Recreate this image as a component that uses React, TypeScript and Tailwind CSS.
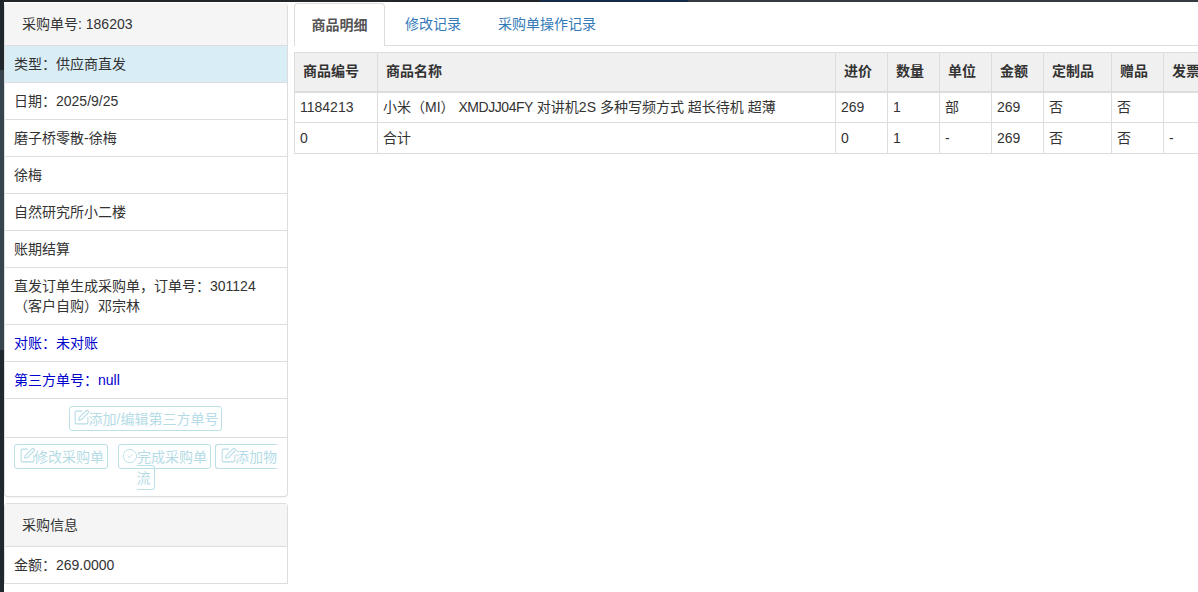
import React from 'react';
import { SquarePen, CircleCheck } from 'lucide-react';

const font = "font-['Liberation_Sans','Noto_Sans_CJK_SC',sans-serif]";

const infoRows = ['日期：2025/9/25', '磨子桥零散-徐梅', '徐梅', '自然研究所小二楼', '账期结算'];

const headers = [
  { label: '商品编号', width: 'w-[83px]' },
  { label: '商品名称', width: 'w-[458px]' },
  { label: '进价', width: 'w-[52px]' },
  { label: '数量', width: 'w-[52px]' },
  { label: '单位', width: 'w-[52px]' },
  { label: '金额', width: 'w-[52px]' },
  { label: '定制品', width: 'w-[68px]' },
  { label: '赠品', width: 'w-[52px]' },
  { label: '发票', width: 'w-[52px]' },
];

const productName = (
  <>
    小米（MI） <span className="tracking-[-0.45px]">XMDJJ04FY</span> 对讲机2S 多种写频方式 超长待机 超薄
  </>
);

const rows: { id: string; cells: React.ReactNode[] }[] = [
  { id: '1184213', cells: ['1184213', productName, '269', '1', '部', '269', '否', '否', ''] },
  { id: '0', cells: ['0', '合计', '0', '1', '-', '269', '否', '否', '-'] },
];

const Row: React.FC<{ children: React.ReactNode; className?: string }> = ({ children, className = '' }) => (
  <div className={`border-b border-[#ddd] px-[9px] py-[8px] leading-[20px] ${className}`}>{children}</div>
);

// inline on purpose: the last button breaks over two lines like the original link does
const GhostButton: React.FC<{ label: string; icon?: 'edit' | 'check'; className?: string }> = ({ label, icon = 'edit', className = 'pl-[5px]' }) => (
  <a className={`rounded-[3px] border border-[#bce0e8] py-[3.5px] pr-[3px] text-[#b5dce6] ${className}`}>
    {icon === 'edit' ? (
      <SquarePen className="mx-[-1.5px] inline h-[17px] w-[17px] align-[-3px]" strokeWidth={1.5} />
    ) : (
      <CircleCheck className="mx-[-1px] inline h-[16px] w-[16px] align-[-3px]" strokeWidth={1.3} />
    )}
    {label}
  </a>
);

export default function App() {
  return (
    <div className={`flex h-[592px] w-[1198px] flex-col overflow-hidden bg-white text-[14px] text-[#333] ${font}`}>
      <div className="flex h-[2px] shrink-0">
        <div className="w-[540px] bg-[#222527]" />
        <div className="w-[148px] bg-[#142c4a]" />
        <div className="flex-1 bg-[#343a40]" />
      </div>
      <div className="flex min-h-0 flex-1">
        <div className="flex w-[4px] shrink-0 flex-col">
          <div className="h-[68px] bg-[#20272c]" />
          <div className="h-[280px] bg-[#36444e]" />
          <div className="flex-1 bg-[#20282d]" />
        </div>
        <div className="flex w-[284px] shrink-0 flex-col gap-[6px] pt-[1px]">
          <div className="shrink-0 rounded-[4px] border border-t-0 border-[#ddd] shadow-[0_1px_1px_rgba(0,0,0,0.05)]">
            <div className="flex h-[43px] items-center rounded-t-[4px] border-b border-[#ddd] bg-[#f5f5f5] pl-[17px]">采购单号: 186203</div>
            <Row className="bg-[#d9edf7]">类型：供应商直发</Row>
            {infoRows.map(text => <Row key={text}>{text}</Row>)}
            <Row>直发订单生成采购单，订单号：301124（客户自购）邓宗林</Row>
            <Row className="text-[#0000cd]">对账：未对账</Row>
            <Row className="text-[#0000cd]">第三方单号：null</Row>
            <div className="border-b border-[#ddd] py-[8px] pl-[9px] pr-[10px] text-center leading-[22px]">
              <GhostButton label="添加/编辑第三方单号" />
            </div>
            <div className="pb-[8px] pl-[9px] pr-[10px] pt-[8px] text-center leading-[21px]">
              <GhostButton label="修改采购单" />
              <GhostButton label="完成采购单" icon="check" className="ml-[10px] pl-[4px]" />
              <GhostButton label="添加物流" className="ml-[4px] pl-[5px]" />
            </div>
          </div>
          <div className="rounded-t-[4px] border border-b-0 border-[#ddd]">
            <div className="flex h-[43px] items-center border-b border-[#ddd] bg-[#f5f5f5] pl-[17px]">采购信息</div>
            <Row>金额：269.0000</Row>
          </div>
        </div>
        <div className="ml-[6px] min-w-0 flex-1 pt-[1px]">
          <div className="flex h-[43px] border-b border-[#ddd]">
            <div className="flex h-[43px] w-[91px] items-center justify-center rounded-t-[4px] border border-b-0 border-[#ddd] bg-white font-bold text-[#555]">商品明细</div>
            <div className="flex items-center pl-[20px] text-[#337ab7]">修改记录</div>
            <div className="flex items-center pl-[37px] text-[#337ab7]">采购单操作记录</div>
          </div>
          <div className="mt-[6px] overflow-hidden">
            <table className="w-[921px] table-fixed border-collapse">
              <thead>
                <tr className="h-[39px] bg-[#f0f0f0]">
                  {headers.map(h => (
                    <th key={h.label} className={`${h.width} whitespace-nowrap border border-b-2 border-[#ddd] pl-[8px] text-left font-bold`}>{h.label}</th>
                  ))}
                </tr>
              </thead>
              <tbody>
                {rows.map(row => (
                  <tr key={row.id} className="h-[31px]">
                    {row.cells.map((cell, i) => (
                      <td key={i} className="whitespace-nowrap border border-[#ddd] pl-[5px]">{cell}</td>
                    ))}
                  </tr>
                ))}
              </tbody>
            </table>
          </div>
        </div>
      </div>
    </div>
  );
}
